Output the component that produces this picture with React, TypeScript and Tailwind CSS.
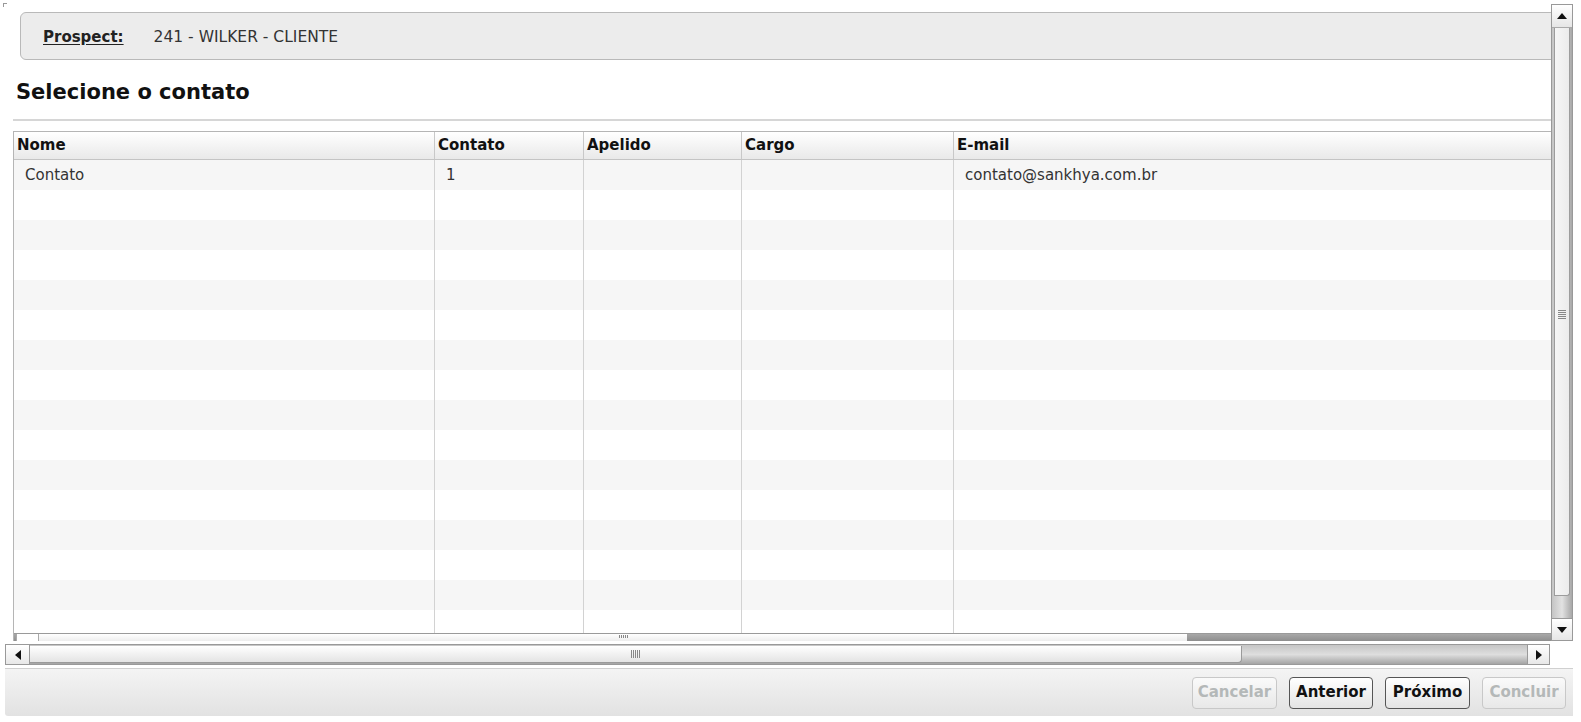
import React from 'react';

const cols = [
  { title: 'Nome', w: 'w-[421px]' },
  { title: 'Contato', w: 'w-[149px]' },
  { title: 'Apelido', w: 'w-[158px]' },
  { title: 'Cargo', w: 'w-[212px]' },
  { title: 'E-mail', w: 'flex-1' },
];

const rows: string[][] = [['Contato', '1', '', '', 'contato@sankhya.com.br']];
for (let i = 0; i < 15; i++) rows.push(['', '', '', '', '']);

const Triangle = ({ dir }: { dir: 'up' | 'down' | 'left' | 'right' }) => {
  const pts = {
    up: '0,6 5,0 10,6',
    down: '0,0 10,0 5,6',
    left: '6,0 6,10 0,5',
    right: '0,0 0,10 6,5',
  }[dir];
  const vert = dir === 'up' || dir === 'down';
  return (
    <svg width={vert ? 10 : 6} height={vert ? 6 : 10} viewBox={vert ? '0 0 10 6' : '0 0 6 10'}>
      <polygon points={pts} fill="#111" />
    </svg>
  );
};

const App = () => {
  return (
    <div
      className="relative w-[1581px] h-[722px] bg-white overflow-hidden text-[15px] text-[#222]"
      style={{ fontFamily: '"DejaVu Sans", Verdana, sans-serif' }}
    >
      {/* tiny corner mark */}
      <div className="absolute left-[3px] top-[3px] w-[4px] h-[4px] border-l border-t border-[#999]"></div>

      <div className="flex pt-[4px] h-[641px]">
        {/* main content */}
        <div className="w-[1551px] flex flex-col">
          {/* Prospect box */}
          <div className="ml-[20px] mr-[-2px] mt-[8px] h-[48px] pt-[3px] bg-[#ececec] border border-[#b9b9b9] rounded-l-[6px] flex items-center">
            <span className="ml-[22px] font-bold underline underline-offset-2 text-[#222] text-[15px]">Prospect:</span>
            <span className="ml-[30px] text-[#333] text-[15.5px]">241 - WILKER - CLIENTE</span>
          </div>

          <h1 className="ml-[16px] mt-[19px] text-[21px] leading-[26px] font-bold text-[#111]">Selecione o contato</h1>

          <div className="ml-[13px] mt-[14px] h-[2px] bg-[#d6d6d6]"></div>

          {/* table */}
          <div className="ml-[13px] mt-[10px] flex-1 flex flex-col border-l border-t border-[#b5b5b5] overflow-hidden">
            <div className="flex h-[28px] bg-gradient-to-b from-white to-[#e9e9e9] border-b border-[#c4c4c4]">
              {cols.map((c, i) => (
                <div
                  key={i}
                  className={`${c.w} flex items-center pl-[3px] font-bold text-[#111] text-[15px] ${i < cols.length - 1 ? 'border-r border-[#c8c8c8]' : ''}`}
                >
                  {c.title}
                </div>
              ))}
            </div>
            <div className="flex-1 overflow-hidden">
              {rows.map((r, ri) => (
                <div key={ri} className={`flex h-[30px] ${ri % 2 === 0 ? 'bg-[#f6f6f6]' : 'bg-white'}`}>
                  {cols.map((c, ci) => (
                    <div
                      key={ci}
                      className={`${c.w} flex items-center pl-[11px] text-[#333] ${ci < cols.length - 1 ? 'border-r border-[#d2d2d2]' : ''}`}
                    >
                      {r[ci]}
                    </div>
                  ))}
                </div>
              ))}
            </div>
            {/* inner horizontal scrollbar */}
            <div className="h-[8px] flex border-t border-[#9a9a9a] bg-gradient-to-b from-[#a8a8a8] to-[#8e8e8e]">
              <div className="w-[2px]"></div>
              <div className="w-[23px] bg-white border-x border-[#aaa]"></div>
              <div className="w-[1148px] bg-gradient-to-b from-white to-[#ededed] flex justify-center items-start">
                <div className="mt-[1px] flex gap-[1px] ml-[20px]">
                  {[0, 1, 2, 3, 4].map((k) => (
                    <div key={k} className="w-[1px] h-[3px] bg-[#888]"></div>
                  ))}
                </div>
              </div>
            </div>
          </div>
        </div>

        {/* vertical scrollbar */}
        <div className="w-[22px] flex flex-col border border-[#999] bg-[#eee]">
          <div className="h-[23px] flex items-center justify-center bg-gradient-to-b from-white to-[#e6e6e6] border-b border-[#aaa]">
            <Triangle dir="up" />
          </div>
          <div className="flex-1 flex flex-col bg-gradient-to-r from-[#c4c4c4] via-[#e2e2e2] to-[#a8a8a8]">
            <div className="h-[568px] mx-[2px] bg-gradient-to-r from-[#f6f6f6] to-[#ebebeb] border-x border-b border-[#9c9c9c] rounded-br-[3px] flex items-center justify-center">
              <div className="flex flex-col gap-[1px] mt-[5px]">
                {[0, 1, 2, 3, 4].map((k) => (
                  <div key={k} className="w-[8px] h-[1px] bg-[#888]"></div>
                ))}
              </div>
            </div>
          </div>
          <div className="h-[22px] flex items-center justify-center bg-gradient-to-b from-white to-[#e6e6e6] border-t border-[#999]">
            <Triangle dir="down" />
          </div>
        </div>
      </div>

      {/* outer horizontal scrollbar */}
      <div className="ml-[5px] mt-[3px] w-[1545px] h-[21px] flex border border-[#999] bg-gradient-to-b from-[#c6c6c6] via-[#dedede] to-[#a4a4a4]">
        <div className="w-[24px] flex items-center justify-center bg-gradient-to-b from-white to-[#e8e8e8] border-r border-[#999]">
          <Triangle dir="left" />
        </div>
        <div className="w-[1212px] my-[1px] bg-gradient-to-b from-white to-[#e4e4e4] border-b border-r border-[#9a9a9a] rounded-br-[4px] flex items-center justify-center">
          <div className="flex gap-[1px]">
            {[0, 1, 2, 3, 4].map((k) => (
              <div key={k} className="w-[1px] h-[8px] bg-[#888]"></div>
            ))}
          </div>
        </div>
        <div className="flex-1"></div>
        <div className="w-[22px] flex items-center justify-center bg-gradient-to-b from-white to-[#e8e8e8] border-l border-[#999]">
          <Triangle dir="right" />
        </div>
      </div>

      {/* footer */}
      <div className="ml-[5px] mt-[3px] w-[1568px] h-[48px] bg-gradient-to-b from-[#f4f4f4] to-[#e2e2e2] border-t border-[#d0d0d0] rounded-bl-[3px] flex items-center justify-end gap-[12px] pr-[7px]">
        <button className="w-[85px] h-[32px] rounded-[4px] border border-[#c8c8c8] bg-gradient-to-b from-[#fafafa] to-[#e8e8e8] font-bold text-[15px] text-[#b4b8b8]">
          Cancelar
        </button>
        <button className="w-[84px] h-[32px] rounded-[4px] border border-[#555] bg-gradient-to-b from-white to-[#e4e4e4] font-bold text-[15px] text-[#111]">
          Anterior
        </button>
        <button className="w-[85px] h-[32px] rounded-[4px] border border-[#555] bg-gradient-to-b from-white to-[#e4e4e4] font-bold text-[15px] text-[#111]">
          Próximo
        </button>
        <button className="w-[84px] h-[32px] rounded-[4px] border border-[#c8c8c8] bg-gradient-to-b from-[#fafafa] to-[#e8e8e8] font-bold text-[15px] text-[#b4b8b8]">
          Concluir
        </button>
      </div>
    </div>
  );
};

export default App;
